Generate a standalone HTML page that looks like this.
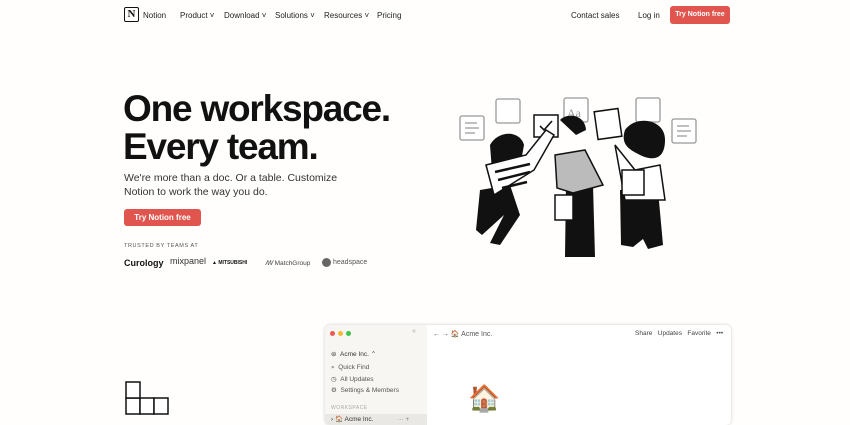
<!DOCTYPE html>
<html><head><meta charset="utf-8"><style>
*{margin:0;padding:0;box-sizing:border-box}
body{width:850px;height:420px;overflow:hidden;background:#fffefc;font-family:"Liberation Sans",sans-serif;color:#111;position:relative}
.a{position:absolute;white-space:nowrap}
.nav{font-size:8px;color:#222}
.btn{background:#e0564f;color:#fff;font-weight:bold;border-radius:3px;text-align:center}
</style></head><body>
<div class="a" style="left:124px;top:7px;width:15px;height:15px;border:1.5px solid #111;border-radius:2px;font-family:'Liberation Serif',serif;font-weight:bold;font-size:11px;text-align:center;line-height:12px">N</div>
<div class="a nav" style="left:143px;top:11px;font-size:8px">Notion</div>
<div class="a nav" style="left:180px;top:11px">Product ˅</div>
<div class="a nav" style="left:224px;top:11px">Download ˅</div>
<div class="a nav" style="left:275px;top:11px">Solutions ˅</div>
<div class="a nav" style="left:324px;top:11px">Resources ˅</div>
<div class="a nav" style="left:377px;top:11px">Pricing</div>
<div class="a nav" style="left:571px;top:11px">Contact sales</div>
<div class="a nav" style="left:638px;top:11px">Log in</div>
<div class="a btn" style="left:670px;top:6px;width:60px;height:18px;font-size:7px;line-height:18px">Try Notion free</div>

<div class="a" style="left:123px;top:90px;font-size:37px;font-weight:bold;line-height:38px;letter-spacing:-1.2px">One workspace.<br>Every team.</div>
<div class="a" style="left:124px;top:171px;font-size:10.5px;line-height:14px;color:#333">We're more than a doc. Or a table. Customize<br>Notion to work the way you do.</div>
<div class="a btn" style="left:124px;top:209px;width:77px;height:17px;font-size:8px;line-height:17px">Try Notion free</div>
<div class="a" style="left:124px;top:243px;font-size:5.5px;letter-spacing:.6px;color:#555">TRUSTED BY TEAMS AT</div>
<div class="a" style="left:124px;top:258px;font-size:9px;font-weight:bold">Curology</div>
<div class="a" style="left:170px;top:256px;font-size:9px;color:#333">mixpanel</div>
<div class="a" style="left:212px;top:260px;font-size:5px;font-weight:bold">▲ MITSUBISHI</div>
<div class="a" style="left:265px;top:259px;font-size:6.5px;color:#444"><i>ꟿ</i> MatchGroup</div>
<div class="a" style="left:322px;top:258px;width:9px;height:9px;border-radius:50%;background:#666"></div>
<div class="a" style="left:333px;top:259px;font-size:7px;color:#555">headspace</div>

<svg class="a" style="left:450px;top:90px" width="260" height="170" viewBox="0 0 260 170">
<g fill="#fff" stroke="#999" stroke-width="1.3">
<rect x="10" y="26" width="24" height="24" rx="2"/><rect x="46" y="9" width="24" height="24" rx="2"/><rect x="114" y="8" width="24" height="24" rx="2"/><rect x="186" y="8" width="24" height="24" rx="2"/><rect x="222" y="29" width="24" height="24" rx="2"/></g>
<g stroke="#999" stroke-width="1.2"><path d="M15 33h12M15 38h14M15 43h10M227 36h12M227 41h14M227 46h10"/></g>
<text x="117" y="27" font-size="12" fill="#999" font-family="Liberation Serif">Aa</text>
<g fill="#fff" stroke="#111" stroke-width="1.5"><rect x="84" y="25" width="24" height="22"/><rect x="146" y="20" width="24" height="28" transform="rotate(-8 158 34)"/></g>
<path d="M90 36l4 4 8-9" stroke="#111" fill="none" stroke-width="1.6"/>
<g fill="#111">
<path d="M40 55c8-15 30-15 34 0l-4 22-28 4z"/>
<path d="M30 100l30-5 10 30-20 30-10-2 14-28-22 20-6-5z"/>
<path d="M110 30c8-8 25-5 26 10l-10 5z"/>
<path d="M116 95h27l2 72h-30z"/>
<path d="M175 40c10-15 40-12 40 10s-15 20-25 15-20-10-15-25z"/>
<path d="M170 100h38l5 55-15 4-5-10-10 8-12-2z"/>
</g>
<g fill="#fff" stroke="#111" stroke-width="1.5">
<path d="M36 75l40-10 20-25 8 5-20 35-40 25z"/>
<path d="M105 65l30-5 18 35-30 8-16-5z" fill="#bbb"/>
<path d="M165 55l20 25 25-5 5 35-40 0z"/>
<rect x="172" y="80" width="22" height="25"/>
<rect x="105" y="105" width="18" height="25"/>
</g>
<g stroke="#111" stroke-width="2.5"><path d="M45 82l35-8M48 90l32-8M52 98l25-6"/></g>
</svg>

<div class="a" style="left:325px;top:325px;width:406px;height:100px;border-radius:5px;box-shadow:0 0 3px rgba(0,0,0,.2);background:#fff;overflow:hidden">
<div class="a" style="left:0;top:0;width:102px;height:100px;background:#f7f6f3"></div>
<div class="a" style="left:5px;top:6px;width:5px;height:5px;border-radius:50%;background:#ee5b55"></div>
<div class="a" style="left:13px;top:6px;width:5px;height:5px;border-radius:50%;background:#f5b93a"></div>
<div class="a" style="left:21px;top:6px;width:5px;height:5px;border-radius:50%;background:#3fc34c"></div>
<div class="a" style="left:87px;top:3px;font-size:7px;color:#aaa">«</div>
<div class="a" style="left:6px;top:25px;font-size:6.5px;color:#333">⊜ &nbsp;Acme Inc. ⌃</div>
<div class="a" style="left:6px;top:39px;font-size:6.5px;color:#555">⌕ &nbsp;Quick Find</div>
<div class="a" style="left:6px;top:50px;font-size:6.5px;color:#555">◷ &nbsp;All Updates</div>
<div class="a" style="left:6px;top:61px;font-size:6.5px;color:#555">⚙ &nbsp;Settings &amp; Members</div>
<div class="a" style="left:6px;top:80px;font-size:5px;color:#aaa;letter-spacing:.5px">WORKSPACE</div>
<div class="a" style="left:0;top:89px;width:102px;height:11px;background:#e9e8e5"></div>
<div class="a" style="left:6px;top:90px;font-size:6.5px;color:#333">› 🏠 Acme Inc. <span style="margin-left:22px;color:#888">··· +</span></div>
<div class="a" style="left:108px;top:5px;font-size:7px;color:#555">← → 🏠 Acme Inc.</div>
<div class="a" style="left:310px;top:5px;font-size:6.5px;color:#444">Share &nbsp; Updates &nbsp; Favorite &nbsp; •••</div>
<div class="a" style="left:143px;top:58px;font-size:26px">🏠</div>
</div>

<svg class="a" style="left:124px;top:380px" width="50" height="40" viewBox="0 0 50 40"><g fill="#fff" stroke="#111" stroke-width="1.5"><rect x="2" y="18" width="14" height="16"/><rect x="16" y="18" width="14" height="16"/><rect x="30" y="18" width="14" height="16"/><rect x="2" y="2" width="14" height="16"/></g></svg>
</body></html>
